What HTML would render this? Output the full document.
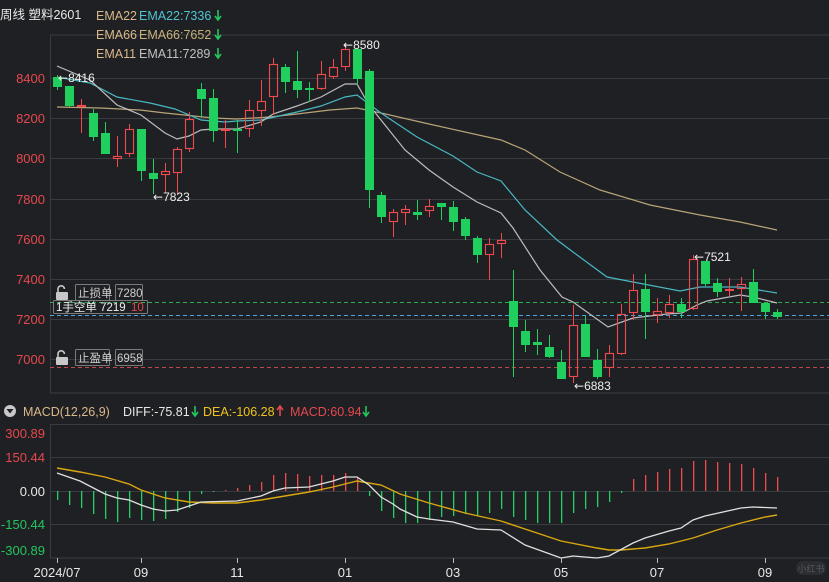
<!DOCTYPE html>
<html><head><meta charset="utf-8"><style>
html,body{margin:0;padding:0;background:#1f2024;width:829px;height:582px;overflow:hidden;font-family:"Liberation Sans","Noto Sans CJK SC",sans-serif}
svg{position:absolute;left:0;top:0}
</style></head><body>
<svg width="829" height="582" xmlns="http://www.w3.org/2000/svg" font-family="Liberation Sans, Noto Sans CJK SC, sans-serif">
<rect width="829" height="582" fill="#1f2024"/>
<g stroke="#3a3b40" stroke-width="1" fill="none">
<path d="M50.5 35V393H829M50.5 35H829"/>
<path d="M50 78.5H829M50 118.5H829M50 158.5H829M50 199.5H829M50 239.5H829M50 279.5H829M50 319.5H829M50 359.5H829"/>
<path d="M50.5 424V558H829M50 424.5H829M50 457.5H829M50 491.5H829M50 524.5H829"/>
</g>
<g font-size="12.5">
<text x="0" y="19" fill="#e8e8e8">周线 塑料2601</text>
<text x="96" y="20" fill="#d9b98a">EMA22</text><text x="139" y="20" fill="#4fc4cf">EMA22:7336</text>
<text x="96" y="39" fill="#d9b98a">EMA66</text><text x="139" y="39" fill="#c8b27a">EMA66:7652</text>
<text x="96" y="58" fill="#d9b98a">EMA11</text><text x="139" y="58" fill="#c0c0c0">EMA11:7289</text>
</g>
<g stroke="#22c55e" stroke-width="1.6" fill="none">
<path d="M218 10v9M215 16l3 4 3-4"/><path d="M218 29v9M215 35l3 4 3-4"/><path d="M218 48v9M215 54l3 4 3-4"/>
</g>
<g font-size="13" fill="#e5484d" text-anchor="end">
<text x="45" y="83">8400</text><text x="45" y="123">8200</text><text x="45" y="163">8000</text><text x="45" y="204">7800</text><text x="45" y="244">7600</text><text x="45" y="284">7400</text><text x="45" y="324">7200</text><text x="45" y="364">7000</text>
<text x="45" y="438">300.89</text><text x="45" y="462">150.44</text>
</g>
<g font-size="13" text-anchor="end"><text x="45" y="496" fill="#e8e8e8">0.00</text><text x="45" y="529" fill="#22c55e">-150.44</text><text x="45" y="555" fill="#22c55e">-300.89</text></g>
<path d="M50 302.5H829" stroke="#2fae4e" stroke-dasharray="4 3"/>
<path d="M50 315.5H829" stroke="#4aa7e0" stroke-dasharray="4 3"/>
<path d="M50 367.5H829" stroke="#c0474c" stroke-dasharray="4 3"/>
<polyline fill="none" stroke="#b8a477" stroke-width="1.2" points="57,107 100,108 140,110 165,113 213,118 237,119 270,117 297,114 330,110 357,108 381,113 429,124 501,140 525,150 560,172 600,190 650,205 700,215 740,222 777,230"/>
<polyline fill="none" stroke="#48b8c2" stroke-width="1.2" points="57,77 90,83 117,97 150,103 175,109 201,120 225,122 237,121 261,120 297,112 321,106 345,97 357,95 381,113 417,137 453,156 477,172 501,181 525,210 557,240 573,252 607,277 633,282 680,291 700,287 740,287 777,293"/>
<polyline fill="none" stroke="#bdbdbd" stroke-width="1.2" points="57,66 90,80 117,105 141,115 165,133 177,139 189,136 201,130 213,129 237,129 261,122 273,114 297,106 321,97 345,84 357,84 369,105 381,120 405,150 429,170 453,187 477,202 501,213 513,228 540,270 562,297 573,302 608,327 633,318 667,314 682,313 697,305 707,301 740,295 753,297 777,303"/>
<g id="c"></g>
<g font-size="12" fill="#eeeeee" font-family="DejaVu Sans, sans-serif">
<text x="58" y="82">←<tspan font-family="Liberation Sans">8416</tspan></text><text x="343" y="49">←<tspan font-family="Liberation Sans">8580</tspan></text><text x="153" y="201">←<tspan font-family="Liberation Sans">7823</tspan></text><text x="574" y="390">←<tspan font-family="Liberation Sans">6883</tspan></text><text x="694" y="261">←<tspan font-family="Liberation Sans">7521</tspan></text>
</g>
<g fill="none" stroke="#7a7a7a">
<rect x="75.5" y="284.5" width="34" height="16" rx="1"/><rect x="115.5" y="284.5" width="27" height="16" rx="1"/>
<rect x="53.5" y="300.5" width="94" height="13" rx="1"/>
<rect x="75.5" y="349.5" width="34" height="16" rx="1"/><rect x="115.5" y="349.5" width="27" height="16" rx="1"/>
</g>
<g fill="#c8c8c8">
<rect x="56" y="292" width="12" height="8" rx="1"/><path d="M58 292v-3a3.2 3.2 0 0 1 6.4 0" fill="none" stroke="#c8c8c8" stroke-width="1.6"/>
<rect x="56" y="357" width="12" height="8" rx="1"/><path d="M58 357v-3a3.2 3.2 0 0 1 6.4 0" fill="none" stroke="#c8c8c8" stroke-width="1.6"/>
</g>
<g font-size="11.5" fill="#d0d0d0">
<text x="78" y="297">止损单</text><text x="117" y="297">7280</text>
<text x="56" y="311" fill="#eeeeee">1手空单  7219</text><text x="131" y="311" fill="#e5484d">10</text>
<text x="78" y="362">止盈单</text><text x="117" y="362">6958</text>
</g>
<circle cx="10" cy="411" r="6" fill="#c8c8c8"/><path d="M6.5 409h7l-3.5 4.5z" fill="#1f2024"/>
<g font-size="12.5">
<text x="23" y="416" fill="#d9b98a">MACD(12,26,9)</text>
<text x="123" y="416" fill="#e8e8e8">DIFF:-75.81</text>
<text x="203" y="416" fill="#f0c419">DEA:-106.28</text>
<text x="290" y="416" fill="#e5484d">MACD:60.94</text>
</g>
<path d="M195 406v9M192 412l3 4 3-4" stroke="#22c55e" stroke-width="1.6" fill="none"/>
<path d="M280 416v-9M277 410l3-4 3 4" stroke="#e5484d" stroke-width="1.6" fill="none"/>
<path d="M366 406v9M363 412l3 4 3-4" stroke="#22c55e" stroke-width="1.6" fill="none"/>
<g id="h"></g>
<polyline fill="none" stroke="#d9a80f" stroke-width="1.4" points="57,468 80,472 105,477 129,484 141,490 165,498 189,502 213,503 237,503 261,500 285,496 309,492 333,487 357,481 381,485 400,494 429,503 465,513 501,521 537,533 561,541 597,548 609,550 621,550 645,548 669,544 693,538 717,530 741,523 765,517 777,515"/>
<polyline fill="none" stroke="#e0e0e0" stroke-width="1.3" points="57,473 80,481 105,494 117,498 129,500 141,505 153,509 165,511 177,510 189,506 201,502 237,501 261,496 273,491 285,488 309,487 333,481 345,477 357,477 369,485 381,497 393,504 400,509 417,517 429,519 453,522 477,529 501,530 525,545 561,558 573,556 597,558 609,556 633,543 645,538 669,531 681,528 693,520 705,516 741,508 753,507 777,508"/>
<g stroke="#bbbbbb"><path d="M57.5 558v5M141.5 558v5M237.5 558v5M345.5 558v5M453.5 558v5M561.5 558v5M657.5 558v5M765.5 558v5"/></g>
<g font-size="13" fill="#e8e8e8" text-anchor="middle">
<text x="57" y="577">2024/07</text><text x="141" y="577">09</text><text x="237" y="577">11</text><text x="345" y="577">01</text><text x="453" y="577">03</text><text x="561" y="577">05</text><text x="657" y="577">07</text><text x="765" y="577">09</text>
</g>
<rect x="796" y="561" width="30" height="14" rx="7" fill="#2c2d31"/><text x="811" y="572" font-size="9" fill="#55565a" text-anchor="middle">小红书</text>
</svg>
<script>
var C=[[57,75,90,77,87,'g'],[69,86,107,86,106,'g'],[81,99,133,105,107,'r'],[93,109,141,113,137,'g'],[105,122,154,133,154,'g'],[117,136,167,156,159,'r'],[129,124,157,129,154,'r'],[141,129,181,129,171,'g'],[153,159,194,173,179,'g'],[165,163,193,171,175,'r'],[177,147,194,149,173,'r'],[189,112,152,119,149,'r'],[201,83,118,89,99,'g'],[213,89,142,98,131,'g'],[225,120,148,129,131,'f'],[237,120,153,129,131,'g'],[249,100,137,110,129,'r'],[261,80,126,101,111,'r'],[273,58,115,64,97,'r'],[285,64,93,67,82,'g'],[297,51,98,81,90,'g'],[309,82,102,88,89,'g'],[321,61,90,74,89,'r'],[333,59,79,67,77,'r'],[345,43,71,49,67,'r'],[357,49,85,49,79,'g'],[369,69,208,71,190,'g'],[381,192,223,195,217,'g'],[393,209,237,212,222,'r'],[405,205,225,209,213,'r'],[417,200,220,212,215,'g'],[429,199,217,206,211,'r'],[441,203,220,203,207,'g'],[453,201,231,207,222,'g'],[465,217,240,219,236,'g'],[477,236,263,238,255,'g'],[489,238,280,244,255,'r'],[501,233,258,240,244,'r'],[513,270,377,301,327,'g'],[525,320,352,331,345,'g'],[537,329,355,342,345,'g'],[549,335,358,347,357,'g'],[561,350,379,362,379,'g'],[573,305,383,325,377,'r'],[585,316,357,324,357,'g'],[597,349,379,360,377,'g'],[609,345,377,353,368,'r'],[621,304,355,314,354,'r'],[633,274,320,290,313,'r'],[645,274,339,289,312,'g'],[657,298,323,311,315,'r'],[669,295,318,304,313,'r'],[681,298,318,304,312,'g'],[693,255,310,259,309,'r'],[705,261,286,261,284,'g'],[717,278,297,283,292,'g'],[729,278,296,289,291,'f'],[741,277,311,284,289,'r'],[753,269,303,282,303,'g'],[765,303,319,303,312,'g'],[777,309,319,312,317,'g']];
var G='#20cf5e',R='#f04a4f',s='';
C.forEach(function(c){var x=c[0],col=c[5]=='g'?G:R;
if(c[5]=='r'){
s+='<rect x="'+x+'" y="'+c[1]+'" width="1" height="'+(c[3]-c[1])+'" fill="'+R+'"/>';
s+='<rect x="'+x+'" y="'+c[4]+'" width="1" height="'+(c[2]-c[4])+'" fill="'+R+'"/>';
s+='<rect x="'+(x-3.5)+'" y="'+(c[3]+.5)+'" width="8" height="'+Math.max(c[4]-c[3]-1,1)+'" fill="none" stroke="'+R+'" stroke-width="1.1"/>';
}else{
s+='<rect x="'+x+'" y="'+c[1]+'" width="1" height="'+(c[2]-c[1])+'" fill="'+col+'"/>';
s+='<rect x="'+(x-4)+'" y="'+c[3]+'" width="9" height="'+Math.max(c[4]-c[3],2)+'" fill="'+col+'"/>';}});
document.getElementById('c').innerHTML=s;
var H=[[57,500],[69,505],[81,508],[93,514],[105,519],[117,522],[129,518],[141,520],[153,521],[165,519],[177,512],[189,508],[201,494],[213,492],[225,490],[237,488],[249,485],[261,482],[273,475],[285,473],[297,474],[309,476],[321,475],[333,475],[345,473],[357,477],[369,496],[381,511],[393,518],[405,523],[417,523],[429,520],[441,517],[453,516],[465,514],[477,516],[489,513],[501,509],[513,517],[525,520],[537,523],[549,523],[561,523],[573,513],[585,509],[597,507],[609,502],[621,493],[633,479],[645,475],[657,472],[669,469],[681,468],[693,461],[705,460],[717,462],[729,463],[741,464],[753,468],[765,473],[777,477]];
var t='';H.forEach(function(b){var up=b[1]<491,col=up?'#f04a4f':'#22d065';var y0=up?b[1]:491,h=Math.abs(b[1]-491);t+='<rect x="'+b[0]+'" y="'+y0+'" width="1.3" height="'+Math.max(h,1)+'" fill="'+col+'"/>';});
document.getElementById('h').innerHTML=t;
</script>
</body></html>
